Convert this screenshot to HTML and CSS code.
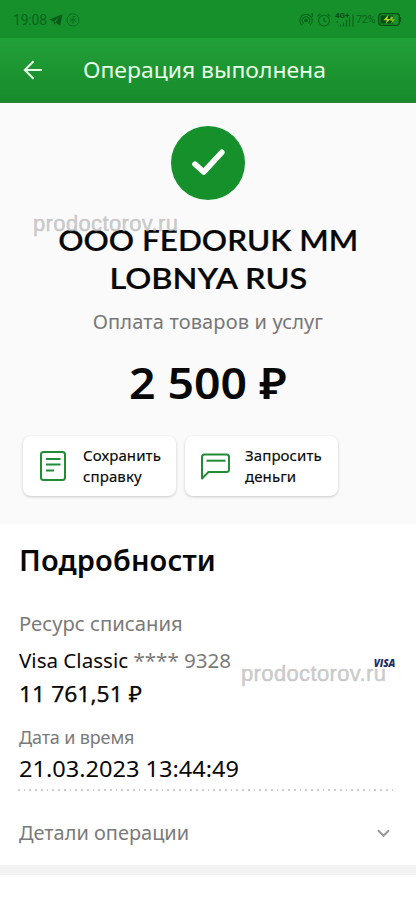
FILE: index.html
```
<!DOCTYPE html>
<html lang="ru">
<head>
<meta charset="utf-8">
<meta name="viewport" content="width=device-width, initial-scale=1">
<title>Операция выполнена</title>
<link rel="stylesheet" href="styles.css">
</head>
<body>
<div class="status">
  <span class="clock">19:08</span>
  <svg class="tg" width="14" height="12" viewBox="0 0 14 12"><path d="M0 5.8 13.4.3 11.3 11.6 6.8 8.7 5.2 10.8 4.6 7.4Z" fill="#075b18"/><path d="M4.8 7.5 10.5 3 6.3 8.3" fill="#15902b"/></svg>
  <svg class="hex" width="14" height="14" viewBox="0 0 14 14" fill="none" stroke="#0b6a1e" stroke-width=".9"><path d="M4 1.2 7.2.8 10.500 1.800 12.800 5v4L10.500 12.200 7 13 3.500 12.200 1.200 9V5Z"/><path d="M7 3.500H9.500M7 3.500V10.500M4 5.500 10 8.500M10 5.500 4 8.500"/></svg>
  <div class="indicators">
    <svg class="hotspot" width="15" height="14" viewBox="0 0 15 14" fill="none" stroke="#07651a" stroke-width="1.1"><circle cx="7" cy="7.4" r="1.3" fill="#07651a"/><path d="M4.7 10.5A3.8 3.8 0 1 1 9.3 10.5M3.3 12.4A6.2 6.2 0 1 1 11 12.2M12.3 1.1 13.3.6V4"/></svg>
    <svg class="alarm" width="14" height="14" viewBox="0 0 14 14" fill="none" stroke="#07651a" stroke-width="1.1"><circle cx="7" cy="7.6" r="5.4"/><path d="M7 4.5V8L9.3 9M.8 3.4 3.4 1M13.2 3.4 10.6 1"/></svg>
    <span class="net"><b>4G+</b><svg width="20" height="14" viewBox="0 0 20 14" stroke="#07651a" stroke-width="1.2"><path d="M2.200 8v2M5.500 11.500v2M8.500 9.500v4M11.500 7v6.500M14.500 4.500v9M18 1.500v12"/></svg></span>
    <span class="percent">72%</span>
    <svg class="battery" width="24" height="13" viewBox="0 0 24 13"><rect x=".7" y=".7" width="20.6" height="11.6" rx="2.5" fill="none" stroke="#064f13" stroke-width="1.3"/><path d="M22 4q1.600 2.500 0 5" fill="none" stroke="#064f13"/><path d="M2.500 2.500H15V10.500H2.500Z" fill="#064f13"/><path d="M10.500 1.500 5.500 7.200H9L7.500 11 12.300 6H9.200Z" fill="#b9d928"/><path d="M13 3.500 11.500 7.500H14.300L13 11 17 6.600H14.500L15 4Z" fill="#8fc326"/></svg>
  </div>
</div>
<header class="bar">
  <svg class="back" width="20" height="20" viewBox="0 0 20 20" fill="none" stroke="#e9ffe9" stroke-width="2"><path d="M19 10H2M10.500 1.300 1.800 10l8.700 8.700"/></svg>
  <h1 class="title">Операция выполнена</h1>
</header>
<main>
  <section class="summary">
    <div class="done"><svg width="74" height="74" viewBox="0 0 74 74" fill="none"><path d="M24 38.200 32.700 46 50.800 26.300" stroke="#fff" stroke-width="5.600" stroke-linecap="round" stroke-linejoin="round"/></svg></div>
    <h2 class="merchant"><span class="m1">OOO FEDORUK MM</span><br><span class="m2">LOBNYA RUS</span></h2>
    <span class="watermark wm-top">prodoctorov.ru</span>
    <p class="kind">Оплата товаров и услуг</p>
    <p class="amount">2 500 ₽</p>
    <div class="actions">
      <div class="action">
        <svg width="32" height="32" viewBox="0 0 32 32" fill="none" stroke="#218c37" stroke-width="2"><rect x="3" y="2" width="24" height="28" rx="2.500"/><path d="M8 9H22.500M8 14.500H22.500M8 20.500H16"/></svg>
        <span>Сохранить<br>справку</span>
      </div>
      <div class="action">
        <svg width="32" height="32" viewBox="0 0 32 32" fill="none" stroke="#218c37" stroke-width="2" stroke-linejoin="round"><path d="M2 28.500V7Q2 4.500 4.500 4.500H26.500Q29 4.500 29 7V19.500Q29 22 26.500 22H8.500Z"/><path d="M6.500 10.700H25.500"/></svg>
        <span>Запросить<br>деньги</span>
      </div>
    </div>
  </section>
  <section class="details">
    <h2 class="heading">Подробности</h2>
    <p class="label source">Ресурс списания</p>
    <div class="card"><span class="name">Visa Classic <i>**** 9328</i></span><span class="visa">VISA</span></div>
    <span class="watermark wm-low">prodoctorov.ru</span>
    <p class="balance">11 761,51 ₽</p>
    <p class="label date">Дата и время</p>
    <p class="stamp">21.03.2023 13:44:49</p>
    <div class="dots"></div>
    <div class="more"><span>Детали операции</span><svg width="13" height="9" viewBox="0 0 13 9" fill="none" stroke="#999" stroke-width="2"><path d="M1 1.300 6.500 6.800 12 1.300"/></svg></div>
  </section>
  <div class="band"></div>
</main>
</body>
</html>
```
FILE: styles.css
```
* { box-sizing: border-box; }
body { margin: 0; background: #fff; color: #080808; font-family: "Noto Sans", sans-serif; height: 900px; overflow: hidden; }
h1, h2, p { margin: 0; white-space: nowrap; }
svg { display: block; flex: none; }
.status { height: 38px; background: #15902b; display: flex; align-items: center; padding: 1px 14px 0 13px; color: #07651a; font-family: Roboto, sans-serif; }
.clock { font-size: 14px; letter-spacing: -0.2px; width: 36px; }
.tg { margin-right: 3px; }
.indicators { margin-left: auto; display: flex; align-items: center; }
.alarm { margin: 0 4px 0 3px; }
.net { position: relative; width: 20px; }
.net b { position: absolute; left: 0; top: -1px; font-size: 8px; line-height: 7px; color: #064f13; }
.percent { font-size: 11px; width: 19px; margin: 0 3px 0 1px; letter-spacing: -0.4px; }
.bar { height: 65px; background: linear-gradient(#22a038, #178b2b); border-bottom: 1px solid #2c8038; display: flex; align-items: center; padding-left: 23px; color: #e9ffe9; }
.title { font-size: 22px; line-height: 30px; font-weight: 400; transform: scaleX(1.042); transform-origin: left; margin: -2px 0 0 40px; }
.summary { position: relative; height: 421px; background: #fafafa; padding-top: 23px; text-align: center; }
.done { width: 74px; height: 74px; border-radius: 50%; background: #15902b; margin: 0 auto; }
.merchant { font: 600 29px/38px Lato, sans-serif; margin-top: 21px; -webkit-text-stroke: 0.2px; }
.m1, .m2 { display: inline-block; transform: scaleX(1.085); }
.m2 { transform: scaleX(1.12); }
.kind { font-size: 20px; line-height: 30px; color: #777; letter-spacing: 0.15px; margin-top: 10px; }
.amount { width: fit-content; font-size: 44px; line-height: 60px; font-weight: 600; transform: scaleX(1.055); margin: 15px auto 0; }
.actions { display: flex; gap: 9px; padding-left: 23px; margin-top: 24px; }
.action { width: 153px; height: 60px; border-radius: 8px; background: #fff; box-shadow: 0 1px 3px #0003; display: flex; align-items: center; padding-left: 15px; gap: 13px; font-size: 15px; line-height: 21px; -webkit-text-stroke: 0.15px; letter-spacing: 0.1px; text-align: left; }
.watermark { position: absolute; font: 22px/26px "Liberation Sans", sans-serif; letter-spacing: 0.36px; color: #bbbb; -webkit-text-stroke: 0.5px #bbbb; white-space: nowrap; }
.wm-top { left: 33px; top: 108px; }
.wm-low { left: 241px; top: 137px; }
.details { position: relative; height: 341px; padding: 16px 21px 0 19px; }
.heading { font-size: 29px; line-height: 40px; font-weight: 600; letter-spacing: 0.15px; }
.label { color: #7a7a7a; }
.source, .name, .balance, .stamp, .more span { width: fit-content; transform-origin: left; }
.source { font-size: 19px; line-height: 28px; transform: scaleX(1.065); margin-top: 30px; }
.card { display: flex; justify-content: space-between; align-items: center; height: 28px; margin-top: 9px; font-size: 19px; line-height: 28px; }
.name { transform: scaleX(1.082); }
.card i { font-style: normal; color: #7a7a7a; }
.visa { font: italic 800 10px/12px "Open Sans", sans-serif; letter-spacing: -0.2px; color: #1b2d68; margin: 4px 0 0; }
.balance { font-size: 21px; line-height: 28px; -webkit-text-stroke: 0.25px; transform: scaleX(1.09); margin-top: 5px; }
.date { font-size: 18px; line-height: 26px; letter-spacing: -0.15px; margin-top: 16px; }
.stamp { font-size: 21px; line-height: 30px; transform: scaleX(1.122); margin-top: 4px; }
.dots { height: 2px; margin: 5px -1px 0 -1px; background: repeating-linear-gradient(90deg, #ccc 0 1.7px, transparent 1.7px 5.75px); }
.more { display: flex; justify-content: space-between; align-items: center; height: 28px; margin-top: 28px; padding-right: 5px; color: #7a7a7a; font-size: 19px; }
.more span { transform: scaleX(1.05); }
.band { height: 10px; background: #f3f3f3; }
```
